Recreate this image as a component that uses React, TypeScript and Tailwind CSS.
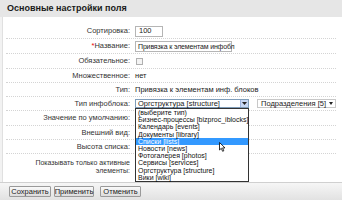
import React from 'react';

const listItems = [
  '(выберите тип)',
  'Бизнес-процессы [bizproc_iblocks]',
  'Календарь [events]',
  'Документы [library]',
  'Списки [lists]',
  'Новости [news]',
  'Фотогалерея [photos]',
  'Сервисы [services]',
  'Оргструктура [structure]',
  'Вики [wiki]',
];

const Row: React.FC<{ label: React.ReactNode; h: string; children?: React.ReactNode }> = ({ label, h, children }) => (
  <div className={`flex items-center ${h} border-b border-dotted border-[#d4d4d4]`}>
    <div className="w-[124px] shrink-0 text-right text-[#333]">{label}</div>
    <div className="ml-[5px] flex items-center text-[#222]">{children}</div>
  </div>
);

const Cursor = () => (
  <svg className="absolute left-[83px] top-[33px] z-20" width="7" height="10" viewBox="0 0 7 10">
    <path d="M0.5 0.5 L0.5 8 L2.3 6.3 L3.6 9.3 L4.8 8.8 L3.6 5.9 L6 5.9 Z" fill="#fff" stroke="#000" strokeWidth="0.8" strokeLinejoin="round" />
  </svg>
);

const btn =
  'h-[11px] border border-[#9a9a9a] rounded-[1px] bg-gradient-to-b from-[#fafafa] to-[#dcdcdc] text-[7.5px] text-[#222] flex items-center justify-center';

const App: React.FC = () => {
  return (
    <div className="relative w-[342px] h-[200px] overflow-hidden bg-white font-['Liberation_Sans',Arial,sans-serif] text-[7.5px] leading-none">
      <div className="h-[17px] bg-[#e6e6e6] pl-[7px] flex items-center text-[9px] font-bold text-[#1a1a1a]">
        Основные настройки поля
      </div>

      <div className="flex h-[165px]">
        <div className="w-[3px] shrink-0 bg-[#f2f2f2] border-r border-[#e0e0e0]" />
        <div className="flex-1 pt-[7px] pl-[3px] pr-[7px]">
          <Row label="Сортировка:" h="h-[15px]">
            <div className="w-[28px] h-[11px] border border-[#b5b5b5] pl-[3px] flex items-center">100</div>
          </Row>
          <Row
            label={
              <>
                <span className="text-[#e00]">*</span>Название:
              </>
            }
            h="h-[15px]"
          >
            <div className="w-[97px] h-[11px] border border-[#b5b5b5] pl-[2px] flex items-center whitespace-nowrap text-[7px] tracking-[-0.15px]">
              Привязка к элементам инфобл
            </div>
          </Row>
          <Row label="Обязательное:" h="h-[15px]">
            <div className="ml-[1px] w-[7px] h-[7px] border border-[#b0b0b0] bg-[#f4f4f4]" />
          </Row>
          <Row label="Множественное:" h="h-[14px]">
            нет
          </Row>
          <Row label="Тип:" h="h-[14px]">
            Привязка к элементам инф. блоков
          </Row>
          <div className="relative z-10">
            <Row label="Тип инфоблока:" h="h-[14px]">
              <div className="relative">
                <div className="w-[114px] h-[9px] border border-[#7f9db9] flex items-center pl-[2px] bg-white">
                  <span className="flex-1 whitespace-nowrap">Оргструктура [structure]</span>
                  <span className="w-[8px] h-[7px] bg-[#c8d8f4] border-l border-[#9db4e0] flex items-center justify-center">
                    <svg width="5" height="3" viewBox="0 0 5 3">
                      <path d="M0 0 H5 L2.5 3 Z" fill="#222" />
                    </svg>
                  </span>
                </div>
                <div className="absolute left-0 top-[9px] w-[114px] border border-[#333] bg-white text-[7px]">
                  {listItems.map((it, i) => (
                    <div
                      key={it}
                      className={`h-[7.2px] leading-[7.2px] pl-[2px] whitespace-nowrap ${
                        i === 4 ? 'bg-[#3399ff] text-white' : 'text-[#111]'
                      }`}
                    >
                      {it}
                    </div>
                  ))}
                  <Cursor />
                </div>
              </div>
              <div className="ml-[8px] w-[79px] h-[9px] border border-[#c8c8c8] flex items-center pl-[3px] pr-[2px] bg-white">
                <span className="flex-1 whitespace-nowrap">Подразделения [5]</span>
                <svg width="4" height="3" viewBox="0 0 4 3">
                  <path d="M0 0 H4 L2 3 Z" fill="#222" />
                </svg>
              </div>
            </Row>
          </div>
          <Row label="Значение по умолчанию:" h="h-[15px]" />
          <Row label="Внешний вид:" h="h-[14px]" />
          <Row label="Высота списка:" h="h-[14px]" />
          <div className="flex h-[27px] pt-[5px]">
            <div className="w-[124px] shrink-0 text-right text-[#333] text-[7px] leading-[8px]">
              Показывать только активные
              <br />
              элементы:
            </div>
          </div>
        </div>
      </div>

      <div className="h-[18px] border-t border-[#d0d0d0] bg-gradient-to-b from-[#f6f6f6] to-[#e2e2e2] flex items-center pl-[9px]">
        <button className={`w-[42px] ${btn}`}>Сохранить</button>
        <button className={`ml-[3px] w-[40px] ${btn}`}>Применить</button>
        <button className={`ml-[6px] w-[41px] ${btn}`}>Отменить</button>
      </div>
    </div>
  );
};

export default App;
